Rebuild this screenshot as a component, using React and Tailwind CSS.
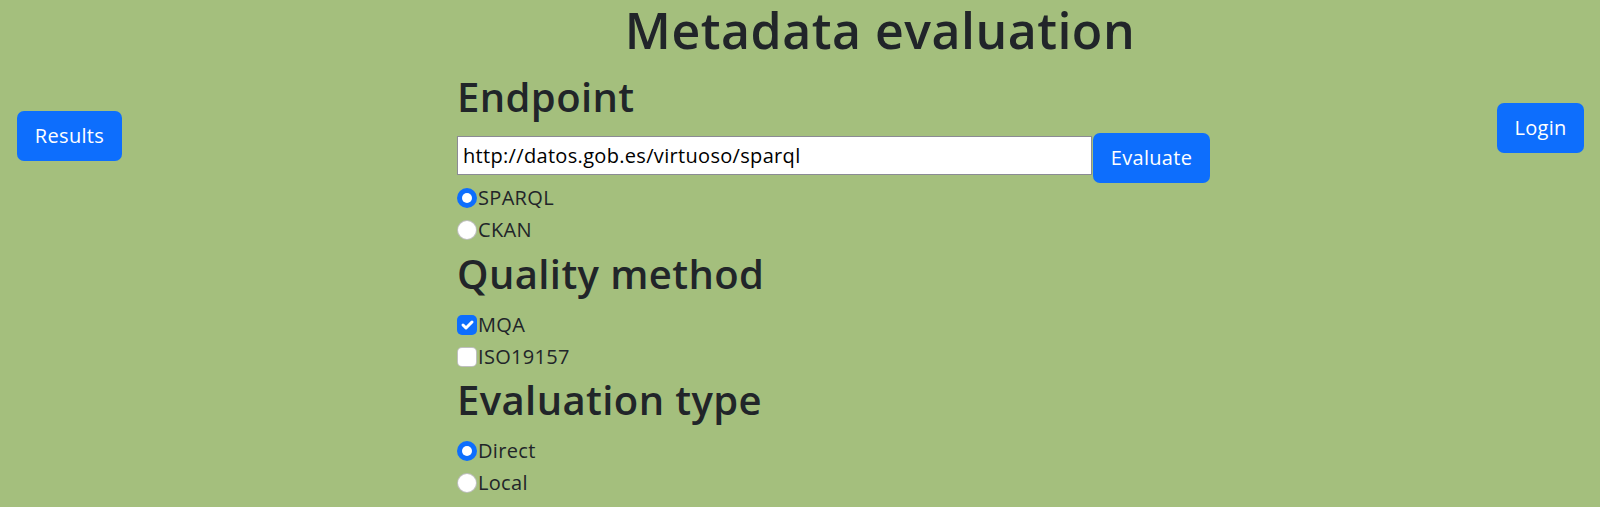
import React from 'react';

const Btn = ({ children, className = '' }) => (
  <button
    type="button"
    className={`h-[50px] rounded-[7px] bg-[#0d6efd] text-white text-[20px] leading-[30px] text-center ${className}`}
  >
    {children}
  </button>
);

const Radio = ({ label, checked }) => (
  <div className="flex items-start h-[32px]">
    <span
      className={`mt-[5px] w-5 h-5 rounded-full shrink-0 flex items-center justify-center ${
        checked ? 'bg-[#0d6efd]' : 'bg-white border border-black/25'
      }`}
    >
      {checked && <span className="w-[10px] h-[10px] rounded-full bg-white" />}
    </span>
    <span className="ml-px text-[20px] leading-[30px]">{label}</span>
  </div>
);

const Check = ({ label, checked }) => (
  <div className="flex items-start h-[32px]">
    <span
      className={`mt-[5px] w-5 h-5 rounded-[5px] shrink-0 flex items-center justify-center ${
        checked ? 'bg-[#0d6efd]' : 'bg-white border border-black/25'
      }`}
    >
      {checked && (
        <svg viewBox="0 0 20 20" className="w-5 h-5">
          <path d="M6 10l3 3l6-6" fill="none" stroke="#fff" strokeWidth="3" strokeLinecap="round" strokeLinejoin="round" />
        </svg>
      )}
    </span>
    <span className="ml-px text-[20px] leading-[30px]">{label}</span>
  </div>
);

export default function App() {
  return (
    <div
      className="min-h-screen w-full flex bg-[#a4bf7d] text-[#212529] tracking-[0.02em]"
      style={{ fontFamily: '"Open Sans", "Noto Sans", sans-serif' }}
    >
      {/* left: results */}
      <div className="w-[457px] shrink-0 pt-[111px] pl-[17px]">
        <Btn className="w-[105px]">Results</Btn>
      </div>

      {/* form */}
      <main className="w-[846px] shrink-0">
        <h1 className="text-center text-[50px] leading-[60px] font-semibold tracking-[0.01em] mb-[13px]">Metadata evaluation</h1>

        <h2 className="text-[40px] leading-[48px] font-semibold tracking-[0.01em] mb-[12px]">Endpoint</h2>
        <div className="flex items-start">
          <div className="mt-[3px] w-[635px] h-[39px] bg-white border border-[#8b8b94] pl-[5px] text-[20px] leading-[37px] text-black">
            http://datos.gob.es/virtuoso/sparql
          </div>
          <Btn className="w-[117px] ml-px">Evaluate</Btn>
        </div>
        <Radio label="SPARQL" checked />
        <Radio label="CKAN" />

        <h2 className="text-[40px] leading-[48px] font-semibold tracking-[0.01em] mt-[3px] mb-[12px]">Quality method</h2>
        <Check label="MQA" checked />
        <Check label="ISO19157" />

        <h2 className="text-[40px] leading-[48px] font-semibold tracking-[0.01em] mt-[2px] mb-[12px]">Evaluation type</h2>
        <Radio label="Direct" checked />
        <Radio label="Local" />
      </main>

      {/* right: login */}
      <div className="flex-1 flex justify-end items-start pt-[103px] pr-[16px]">
        <Btn className="w-[87px]">Login</Btn>
      </div>
    </div>
  );
}
